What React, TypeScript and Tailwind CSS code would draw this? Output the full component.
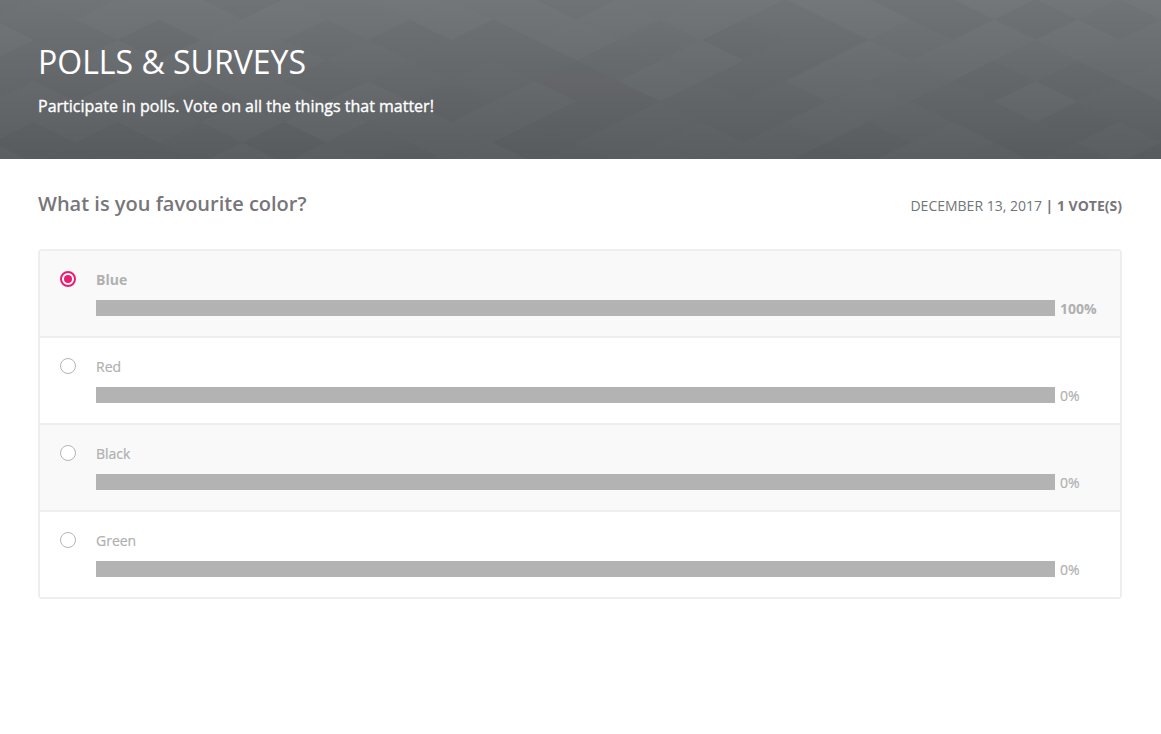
const diamonds: { x: number; y: number; o: number; light: boolean }[] = [];
let seed = 7;
const rnd = () => {
  seed = (seed * 16807) % 2147483647;
  return seed / 2147483647;
};
for (let r = 0; r < 9; r++) {
  for (let c = 0; c < 30; c++) {
    const v = rnd();
    diamonds.push({
      x: c * 83.5 + (r % 2 ? 41.75 : 0) - 8,
      y: r * 20.5 - 1,
      o: 0.005 + rnd() * 0.014,
      light: v > 0.5,
    });
  }
}

function HeaderPattern() {
  return (
    <svg className="absolute inset-0 h-full w-full" viewBox="0 0 1161 159" preserveAspectRatio="none" aria-hidden="true">
      {diamonds.map((d, i) => (
        <polygon
          key={i}
          points={`${d.x - 41.75},${d.y} ${d.x},${d.y - 20.5} ${d.x + 41.75},${d.y} ${d.x},${d.y + 20.5}`}
          fill={d.light ? "#ffffff" : "#000000"}
          opacity={d.o}
        />
      ))}
    </svg>
  );
}

const options = [
  { label: "Blue", pct: "100%", selected: true },
  { label: "Red", pct: "0%", selected: false },
  { label: "Black", pct: "0%", selected: false },
  { label: "Green", pct: "0%", selected: false },
];

export default function App() {
  return (
    <div className="min-h-[734px] bg-white font-['Open_Sans',sans-serif]">
      <header className="relative h-[159px] overflow-hidden bg-gradient-to-b from-[#727578] to-[#5a5d60]">
        <HeaderPattern />
        <div className="relative px-[38px] pt-[41px]">
          <h1 className="text-[32px] leading-[42px] text-white">POLLS &amp; SURVEYS</h1>
          <p className="mt-[12px] text-base leading-[22px] text-white [-webkit-text-stroke:0.35px_white]">
            Participate in polls. Vote on all the things that matter!
          </p>
        </div>
      </header>
      <main className="pr-[39px] pl-[38px] pt-[31px]">
        <div className="flex items-start justify-between">
          <h2 className="text-xl leading-[27px] font-semibold text-[#77767a]">What is you favourite color?</h2>
          <div className="pt-[5px] text-sm leading-[22px] text-[#6f7578]">
            DECEMBER 13, 2017 <b className="font-bold text-[#77767a]">| 1 VOTE(S)</b>
          </div>
        </div>
        <div className="mt-8 rounded-sm border-2 border-[#eeeeee]">
          {options.map((o, i) => (
            <div
              key={o.label}
              className={`flex pt-[19px] pl-5 ${i === 0 ? "h-[85px]" : "h-[87px]"} ${i % 2 === 0 ? "bg-[#f9f9f9]" : "bg-white"} ${
                i > 0 ? "border-t-2 border-[#eeeeee]" : ""
              }`}
            >
              {o.selected ? (
                <span className="mt-px flex h-4 w-4 shrink-0 items-center justify-center rounded-full border-2 border-[#e91e73] bg-white">
                  <span className="h-2 w-2 rounded-full bg-[#e91e73]" />
                </span>
              ) : (
                <span className="mt-px h-4 w-4 shrink-0 rounded-full border border-[#b5b5b5] bg-white" />
              )}
              <div className="ml-5 flex-1">
                <div className={`text-sm leading-5 text-[#b0b0b0] ${o.selected ? "font-bold" : "[-webkit-text-stroke:0.2px_#b0b0b0]"}`}>{o.label}</div>
                <div className="mt-[10px] flex h-4 items-center">
                  <div className="h-4 w-[959px] bg-[#b3b3b3]" />
                  <span className={`mt-[2px] ml-[5px] text-sm text-[#b0b0b0] ${o.selected ? "font-bold" : "[-webkit-text-stroke:0.2px_#b0b0b0]"}`}>{o.pct}</span>
                </div>
              </div>
            </div>
          ))}
        </div>
      </main>
    </div>
  );
}
